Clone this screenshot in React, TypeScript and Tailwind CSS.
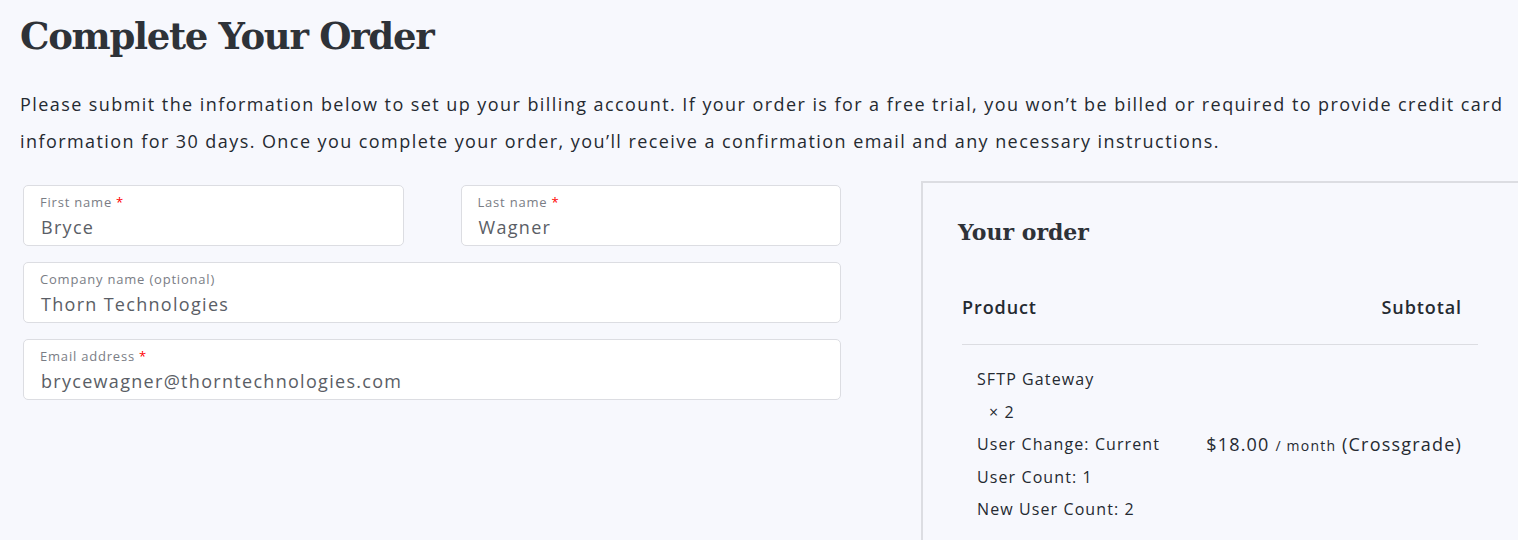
const fieldBox =
  "h-[61px] rounded-[5px] border border-[#dcdde2] bg-white px-[16px] pt-[7px]";

function Field({
  label,
  value,
  required,
  className = "",
}: {
  label: string;
  value: string;
  required?: boolean;
  className?: string;
}) {
  return (
    <div className={`${fieldBox} ${className}`}>
      <div className="text-[13px] leading-[18px] tracking-[0.8px] text-[#7a7d85]">
        {label}
        {required && <span className="ml-[4px] text-[#ff0000]">*</span>}
      </div>
      <div className="mt-[4px] pl-[1px] text-[18px] leading-[24px] tracking-[1.3px] text-[#5a5e66]">
        {value}
      </div>
    </div>
  );
}

export default function App() {
  return (
    <div
      className="h-[540px] w-full overflow-hidden bg-[#f7f8fd] text-[#252a31]"
      style={{ fontFamily: '"Open Sans", "Liberation Sans", sans-serif' }}
    >
      <div className="px-5 pt-[14px]">
        {/* Title */}
        <h1
          className="text-[37px] font-bold leading-[44px] tracking-[-1.3px] text-[#2e3238]"
          style={{ fontFamily: '"DejaVu Serif", "Liberation Serif", serif' }}
        >
          Complete Your Order
        </h1>

        {/* Intro text */}
        <p className="mt-[28px] w-[1494px] text-[18px] leading-[37px] tracking-[1.43px] text-[#252a31]">
          Please submit the information below to set up your billing account.
          If your order is for a free trial, you won’t be billed or required to
          provide credit card information for 30 days. Once you complete your
          order, you’ll receive a confirmation email and any necessary
          instructions.
        </p>

        <div className="mt-[20px] flex">
          {/* Billing fields */}
          <div className="ml-[3px] mt-[5px] flex w-[818px] shrink-0 flex-col gap-[16px]">
            <div className="grid grid-cols-2 gap-[57px]">
              <Field label="First name" value="Bryce" required />
              <Field label="Last name" value="Wagner" required />
            </div>
            <Field label="Company name (optional)" value="Thorn Technologies" />
            <Field
              label="Email address"
              value="brycewagner@thorntechnologies.com"
              required
            />
          </div>

          {/* Order summary */}
          <div className="ml-[80px] mt-[1px] h-[400px] w-[640px] shrink-0 border-l-2 border-t-2 border-[#dcdde2] pl-[35px] pt-[34px]">
            <h2
              className="text-[22px] font-bold leading-[30px] text-[#2e3238]"
              style={{ fontFamily: '"DejaVu Serif", "Liberation Serif", serif' }}
            >
              Your order
            </h2>

            <div className="ml-[4px] mt-[46px] w-[516px]">
              <div className="flex justify-between border-b border-[#dcdde2] pb-[23px] text-[18px] font-semibold leading-[28px] tracking-[0.9px] text-[#252a31]">
                <span>Product</span>
                <span className="mr-[16px]">Subtotal</span>
              </div>

              <div className="flex justify-between pl-[15px] pt-[18px] text-[16px] leading-[32.5px] tracking-[1.1px]">
                <div>
                  <div>SFTP Gateway</div>
                  <div className="pl-[12px]">× 2</div>
                  <div>User Change: Current</div>
                  <div>User Count: 1</div>
                  <div>New User Count: 2</div>
                </div>
                <div className="mr-[16px] pt-[65px] text-[18px] tracking-[1.2px]">
                  $18.00{" "}
                  <span className="text-[14px]">/ month</span> (Crossgrade)
                </div>
              </div>
            </div>
          </div>
        </div>
      </div>
    </div>
  );
}
